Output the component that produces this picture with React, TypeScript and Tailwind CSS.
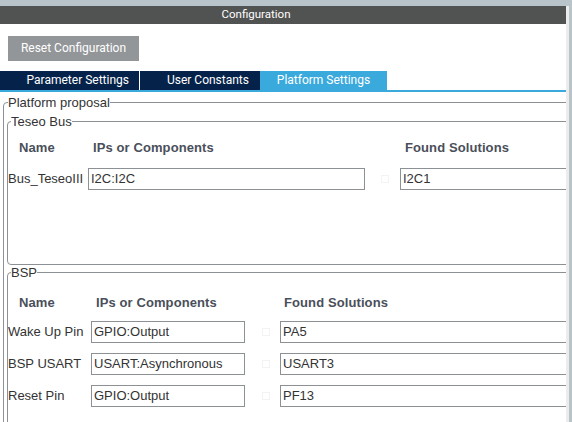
import React from 'react';

interface Row {
  name: string;
  ip: string;
  found: string;
}

const BSP_ROWS: Row[] = [
  { name: 'Wake Up Pin', ip: 'GPIO:Output', found: 'PA5' },
  { name: 'BSP USART', ip: 'USART:Asynchronous', found: 'USART3' },
  { name: 'Reset Pin', ip: 'GPIO:Output', found: 'PF13' },
];

const TABS = ['Parameter Settings', 'User Constants', 'Platform Settings'];

const Field: React.FC<{ value: string; className?: string }> = ({ value, className }) => (
  <div
    className={`h-[22px] border border-[#8c9196] bg-white pl-[2px] flex items-center text-[13px] text-[#333] ${className ?? ''}`}
  >
    {value}
  </div>
);

// faint disabled checkbox between the two columns
const Ghost: React.FC<{ className?: string }> = ({ className }) => (
  <div className={`w-[8px] h-[8px] border border-[#f3f3f3] ${className ?? ''}`} />
);

export default function App() {
  return (
    <div className="w-[572px] h-[422px] flex flex-col bg-[#b9c4ca] overflow-hidden font-['Liberation_Sans',Arial,sans-serif]">
      <div className="h-[6px] shrink-0" />
      <div className="flex flex-1 min-h-0">
        <div className="w-[566px] flex flex-col bg-white overflow-hidden">
          {/* Header */}
          <div className="h-[18px] shrink-0 bg-[#515252] flex items-center justify-center pr-[54px] text-white text-[11.5px] font-['Roboto',sans-serif]">
            Configuration
          </div>

          <div className="pt-[11px] pl-[8px] pb-[10px]">
            <button className="w-[131px] h-[25px] bg-[#939699] text-white text-[12px] font-['Roboto',sans-serif]">
              Reset Configuration
            </button>
          </div>

          {/* Tabs */}
          <div className="flex h-[19px] shrink-0 font-['Roboto',sans-serif] text-[12px] text-white">
            <div className="w-[139px] bg-[#05234a] flex items-center justify-end pr-[10px]">{TABS[0]}</div>
            <div className="w-px bg-white" />
            <div className="w-[120px] bg-[#05234a] flex items-center justify-end pr-[11px]">{TABS[1]}</div>
            <div className="w-[127px] bg-[#3aa9dc] flex items-center justify-center">{TABS[2]}</div>
          </div>
          <div className="h-[2px] bg-[#3aa9dc] shrink-0" />

          {/* Platform proposal */}
          <div className="pl-[3px] pt-[4px]">
            <fieldset className="w-[640px] border border-[#8c9196] rounded-tl-[4px] pl-[3px] pb-[40px]">
              <legend className="ml-[1px] text-[13px] text-[#333] leading-[14px]">Platform proposal</legend>

              <fieldset className="mt-[5px] border border-[#8c9196] rounded-[4px] h-[150px]">
                <legend className="ml-[3px] text-[13px] text-[#333] leading-[14px]">Teseo Bus</legend>
                <div className="flex items-center h-[16px] mt-[11px] text-[13px] font-bold text-[#4a4f5a] tracking-[0.1px]">
                  <span className="w-[85px] pl-[11px]">Name</span>
                  <span className="w-[312px]">IPs or Components</span>
                  <span>Found Solutions</span>
                </div>
                <div className="flex items-center mt-[12px]">
                  <span className="w-[80px] text-[13px] text-[#333]">Bus_TeseoIII</span>
                  <Field value="I2C:I2C" className="w-[277px]" />
                  <Ghost className="ml-[16px]" />
                  <Field value="I2C1" className="ml-[11px] w-[200px]" />
                </div>
              </fieldset>

              <fieldset className="mt-[1px] border border-[#8c9196] rounded-tl-[4px] h-[160px]">
                <legend className="ml-[3px] text-[13px] text-[#333] leading-[14px]">BSP</legend>
                <div className="flex items-center h-[16px] mt-[15px] text-[13px] font-bold text-[#4a4f5a] tracking-[0.1px]">
                  <span className="w-[88px] pl-[11px]">Name</span>
                  <span className="w-[188px]">IPs or Components</span>
                  <span>Found Solutions</span>
                </div>
                <div className="flex flex-col gap-[10px] mt-[10px]">
                  {BSP_ROWS.map((r) => (
                    <div key={r.name} className="flex items-center">
                      <span className="w-[83px] text-[13px] text-[#333] whitespace-nowrap">{r.name}</span>
                      <Field value={r.ip} className="w-[154px]" />
                      <Ghost className="ml-[17px]" />
                      <Field value={r.found} className="ml-[10px] w-[320px]" />
                    </div>
                  ))}
                </div>
              </fieldset>
            </fieldset>
          </div>
        </div>
        <div className="w-[3px] bg-[#ececec]" />
        <div className="w-[3px] bg-[#b9c4ca]" />
      </div>
    </div>
  );
}
